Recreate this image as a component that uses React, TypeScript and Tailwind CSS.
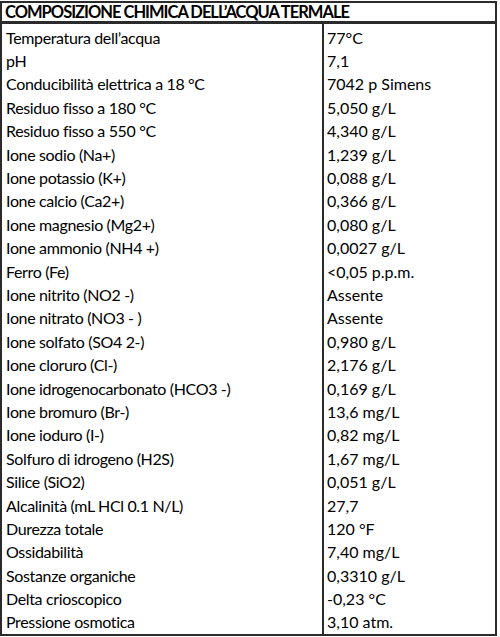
const ROWS: [string, string][] = [
  ['Temperatura dell’acqua', '77°C'],
  ['pH', '7,1'],
  ['Conducibilità elettrica a 18 °C', '7042 p Simens'],
  ['Residuo fisso a 180 °C', '5,050 g/L'],
  ['Residuo fisso a 550 °C', '4,340 g/L'],
  ['Ione sodio (Na+)', '1,239 g/L'],
  ['Ione potassio (K+)', '0,088 g/L'],
  ['Ione calcio (Ca2+)', '0,366 g/L'],
  ['Ione magnesio (Mg2+)', '0,080 g/L'],
  ['Ione ammonio (NH4 +)', '0,0027 g/L'],
  ['Ferro (Fe)', '<0,05 p.p.m.'],
  ['Ione nitrito (NO2 -)', 'Assente'],
  ['Ione nitrato (NO3 - )', 'Assente'],
  ['Ione solfato (SO4 2-)', '0,980 g/L'],
  ['Ione cloruro (Cl-)', '2,176 g/L'],
  ['Ione idrogenocarbonato (HCO3 -)', '0,169 g/L'],
  ['Ione bromuro (Br-)', '13,6 mg/L'],
  ['Ione ioduro (I-)', '0,82 mg/L'],
  ['Solfuro di idrogeno (H2S)', '1,67 mg/L'],
  ['Silice (SiO2)', '0,051 g/L'],
  ['Alcalinità (mL HCl 0.1 N/L)', '27,7'],
  ['Durezza totale', '120 °F'],
  ['Ossidabilità', '7,40 mg/L'],
  ['Sostanze organiche', '0,3310 g/L'],
  ['Delta crioscopico', '-0,23 °C'],
  ['Pressione osmotica', '3,10 atm.'],
]

export default function App() {
  return (
    <div className="w-[500px] h-[637px] bg-white pt-px">
      <div
        className="w-[497px] border-2 border-[#2b2b2b] text-black text-[16px] leading-none tracking-[-0.35px]"
        style={{ fontFamily: 'Lato, "Open Sans", sans-serif' }}
      >
        <div className="h-[21px] flex items-center pl-[3px] font-bold text-[16.5px] border-b-[3px] border-[#2b2b2b] tracking-[-1px]">
          COMPOSIZIONE CHIMICA DELL’ACQUA TERMALE
        </div>
        <div className="flex">
          <div className="w-[322px] border-r-2 border-[#2b2b2b] pt-[2px]">
            {ROWS.map(([label]) => (
              <div key={label} className="h-[23.4px] flex items-center pl-[4px] whitespace-nowrap">
                {label}
              </div>
            ))}
          </div>
          <div className="flex-1 pt-[2px] tracking-normal">
            {ROWS.map(([label, value]) => (
              <div key={label} className="h-[23.4px] flex items-center pl-[3px] whitespace-nowrap">
                {value}
              </div>
            ))}
          </div>
        </div>
      </div>
    </div>
  )
}
